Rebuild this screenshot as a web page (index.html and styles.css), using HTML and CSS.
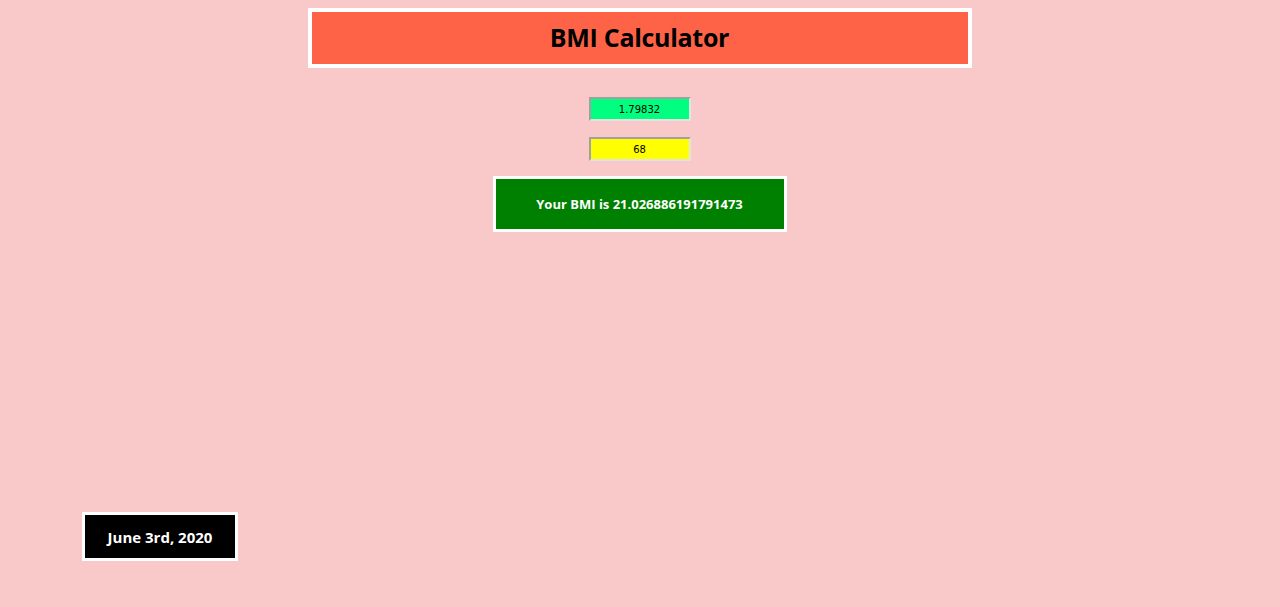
FILE: index.html
```html
<!DOCTYPE html>
<html>
<head>
<meta charset="utf-8">
<link rel="stylesheet" href="styles.css">
</head>
<body>
<div class="page">
  <header class="title-box"><h1>BMI Calculator</h1></header>
  <input class="field height" type="text" value="1.79832">
  <input class="field weight" type="text" value="68">
  <div class="result">Your BMI is 21.026886191791473</div>
</div>
<footer class="foot"><div class="date">June 3rd, 2020</div></footer>
</body>
</html>
```

FILE: styles.css
```css
html, body { margin: 0; padding: 0; }
body {
  background: #f9c8c8;
  font-family: "Open Sans", "DejaVu Sans", sans-serif;
  height: 607px;
  display: flex;
  flex-direction: column;
}
.page {
  display: flex;
  flex-direction: column;
  align-items: center;
  padding-top: 8px;
  flex: 1;
}
.title-box {
  width: 656px;
  height: 52px;
  background: #ff6347;
  border: 4px solid #fff;
  display: flex;
  align-items: center;
  justify-content: center;
  margin-left: -1px;
}
.title-box h1 {
  margin: 0 0 2px 0;
  font-size: 25px;
  font-weight: 700;
  color: #000;
  letter-spacing: -0.3px;
}
.field {
  width: 102px;
  height: 24px;
  box-sizing: border-box;
  text-align: center;
  font-family: "DejaVu Sans", sans-serif;
  font-size: 10px;
  border-style: solid;
  border-width: 2px;
  border-color: #a0a0a0 #e3e3e3 #e3e3e3 #a0a0a0;
  padding: 0;
  margin-top: 29px;
  margin-left: -1px;
}
.field.height { background: #00ff7f; }
.field.weight { background: #ffff00; margin-top: 16px; }
.result {
  margin-top: 15px;
  width: 288px;
  height: 50px;
  background: #008000;
  border: 3px solid #fff;
  color: #fff;
  font-weight: 700;
  font-size: 13px;
  display: flex;
  align-items: center;
  justify-content: center;
  margin-left: -1px;
}
.foot {
  padding: 0 0 46px 82px;
}
.date {
  width: 150px;
  height: 43px;
  background: #000;
  border: 3px solid #fff;
  color: #fff;
  font-weight: 700;
  font-size: 15px;
  display: flex;
  align-items: center;
  justify-content: center;
}
```
